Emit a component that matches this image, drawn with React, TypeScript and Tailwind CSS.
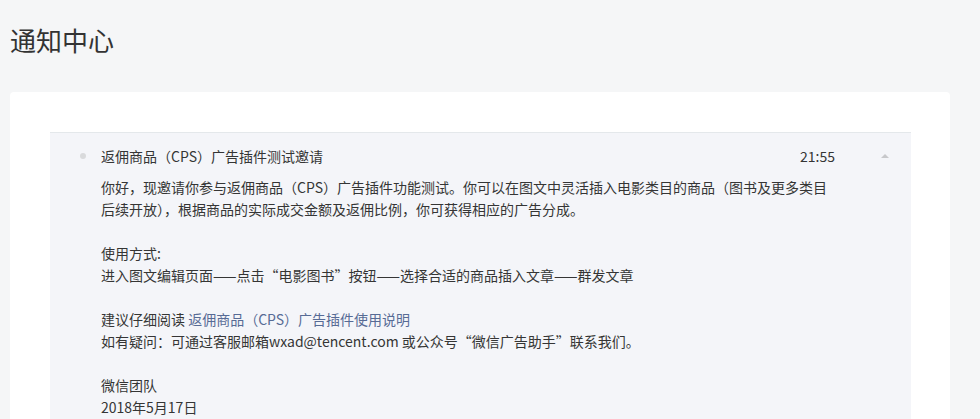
export default function App() {
  const font = { fontFamily: '"Noto Sans CJK SC", "Noto Sans", sans-serif' };
  return (
    <div className="min-h-[419px] bg-[#f5f6f7] pl-[10px] text-[#353535]" style={font}>
      <h1 className="pt-[22px] pb-[34px] text-[26px] leading-[36px] font-normal text-[#333]">通知中心</h1>
      <div className="w-[940px] rounded-[4px] bg-white pl-[40px] pr-[39px] pt-[40px] pb-[20px]">
        <div className="border-t border-[#e4e8eb] bg-[#f4f5f9] pb-[20px]">
          <div className="flex items-center pt-[12px] text-[14px] leading-[22px]">
            <span className="ml-[30px] mr-[15px] h-[6px] w-[6px] rounded-full bg-[#d9dadc]" />
            <span className="flex-1">返佣商品（CPS）广告插件测试邀请</span>
            <span className="mr-[46px]">21:55</span>
            <span className="mr-[22px] h-0 w-0 border-x-[4px] border-b-[4px] border-x-transparent border-b-[#c7c8cb]" />
          </div>
          <div className="ml-[51px] mt-[9px] w-[736px] text-[14px] leading-[22px]">
            <p>
              你好，现邀请你参与返佣商品（CPS）广告插件功能测试。你可以在图文中灵活插入电影类目的商品（图书及更多类目后续开放），根据商品的实际成交金额及返佣比例，你可获得相应的广告分成。
            </p>
            <p className="mt-[22px]">使用方式:</p>
            <p>进入图文编辑页面——点击“电影图书”按钮——选择合适的商品插入文章——群发文章</p>
            <p className="mt-[22px]">
              建议仔细阅读 <a className="text-[#576b95]">返佣商品（CPS）广告插件使用说明</a>
            </p>
            <p>如有疑问：可通过客服邮箱wxad@tencent.com 或公众号“微信广告助手”联系我们。</p>
            <p className="mt-[22px]">微信团队</p>
            <p>2018年5月17日</p>
          </div>
        </div>
      </div>
    </div>
  );
}
